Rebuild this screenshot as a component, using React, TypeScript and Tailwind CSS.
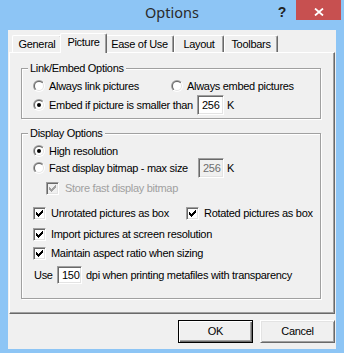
import React from "react";

function Radio({ checked }: { checked?: boolean }) {
  return (
    <svg width="12" height="12" viewBox="0 0 12 12" className="shrink-0">
      <defs>
        <linearGradient id="rOuter" x1="0" y1="0" x2="1" y2="1">
          <stop offset="0.5" stopColor="#a0a0a0" />
          <stop offset="0.5" stopColor="#ffffff" />
        </linearGradient>
        <linearGradient id="rInner" x1="0" y1="0" x2="1" y2="1">
          <stop offset="0.5" stopColor="#696969" />
          <stop offset="0.5" stopColor="#e3e3e3" />
        </linearGradient>
      </defs>
      <circle cx="6" cy="6" r="6" fill="url(#rOuter)" />
      <circle cx="6" cy="6" r="5" fill="url(#rInner)" />
      <circle cx="6" cy="6" r="4" fill="#ffffff" />
      {checked && <circle cx="6" cy="6" r="2" fill="#000000" />}
    </svg>
  );
}

function CheckBox({ disabled }: { disabled?: boolean }) {
  const tops = [2, 3, 4, 3, 2, 1, 0];
  return (
    <div
      className={`w-[13px] h-[13px] shrink-0 border border-t-[#a0a0a0] border-l-[#a0a0a0] border-r-white border-b-white shadow-[inset_1px_1px_0_#696969,inset_-1px_-1px_0_#e3e3e3] flex items-center justify-center ${
        disabled ? "bg-[#f0f0f0]" : "bg-white"
      }`}
    >
      <svg width="7" height="7" viewBox="0 0 7 7" shapeRendering="crispEdges">
        {tops.map((t, i) => (
          <rect key={i} x={i} y={t} width="1" height="3" fill={disabled ? "#a0a0a0" : "#000000"} />
        ))}
      </svg>
    </div>
  );
}

function Field({ children, disabled, size }: { children: React.ReactNode; disabled?: boolean; size: string }) {
  return (
    <div
      className={`${size} shrink-0 border border-t-[#a0a0a0] border-l-[#a0a0a0] border-r-white border-b-white shadow-[inset_1px_1px_0_#696969,inset_-1px_-1px_0_#e3e3e3] flex items-center pl-[4px] ${
        disabled ? "bg-[#f0f0f0] text-[#6d6d6d]" : "bg-white"
      }`}
    >
      {children}
    </div>
  );
}

function Tab({ children, w }: { children: React.ReactNode; w: string }) {
  return (
    <div
      className={`${w} h-[17px] shrink-0 border-t border-l border-r border-t-white border-l-white border-r-[#696969] shadow-[inset_-1px_0_0_#a0a0a0] rounded-tl-[2px] rounded-tr-[2px] flex items-center justify-center`}
    >
      {children}
    </div>
  );
}

export default function App() {
  return (
    <div className="w-[344px] h-[353px] bg-[#8dc5f5] flex flex-col overflow-hidden whitespace-nowrap font-['Liberation_Sans',Arial,sans-serif] text-black text-[11px] leading-[13px] tracking-[-0.3px]">
      {/* Title bar */}
      <div className="h-[30px] shrink-0 grid grid-cols-[1fr_auto_1fr]">
        <div />
        <div className="pt-[2px] font-['Noto_Sans',sans-serif] text-[14.5px] leading-[20px] tracking-normal text-[#2a2a2a]">
          Options
        </div>
        <div className="flex justify-end items-start">
          <div className="w-[16px] mr-[6px] pt-[2px] text-center text-[14px] leading-[20px] font-bold tracking-normal text-[#222]">?</div>
          <div className="w-[45px] h-[20px] mr-[3px] bg-[#c75050] flex justify-center pt-[8px]">
            <svg width="10" height="8" viewBox="0 0 10 8">
              <path d="M1 0.5 L9 7.5 M9 0.5 L1 7.5" stroke="#ffffff" strokeWidth="1.8" fill="none" />
            </svg>
          </div>
        </div>
      </div>

      {/* Client */}
      <div className="mx-[8px] h-[319px] shrink-0 bg-[#f0f0f0] flex flex-col">
        <div className="mx-[1px] flex flex-col">
          {/* Tab strip */}
          <div className="h-[22px] pt-[3px] pl-[3px] flex items-end">
            <Tab w="w-[50px]">General</Tab>
            <div className="relative z-10 -mx-[2px] w-[47px] h-[20px] -mb-[1px] shrink-0 bg-[#f0f0f0] border-t border-l border-r border-t-white border-l-white border-r-[#696969] shadow-[inset_-1px_0_0_#a0a0a0] rounded-tl-[2px] rounded-tr-[2px] flex items-center justify-center pb-[2px]">
              Picture
            </div>
            <Tab w="w-[69px]">Ease of Use</Tab>
            <Tab w="w-[50px]">Layout</Tab>
            <Tab w="w-[54px]">Toolbars</Tab>
          </div>

          {/* Panel */}
          <div className="h-[262px] border border-t-white border-l-white border-r-[#696969] border-b-[#696969] shadow-[inset_-1px_-1px_0_#a0a0a0] pt-[15px] pl-[11px] flex flex-col">
            {/* Link/Embed group */}
            <div className="w-[300px] h-[51px] border border-[#a0a0a0] shadow-[1px_1px_0_#ffffff,inset_1px_1px_0_#ffffff] flex flex-col">
              <div className="-mt-[7px] ml-[6px] self-start px-[2px] bg-[#f0f0f0]">Link/Embed Options</div>
              <div className="mt-[4px] h-[14px] pl-[11px] flex items-center">
                <div className="w-[138px] shrink-0 flex items-center gap-[4px]">
                  <Radio />
                  <span>Always link pictures</span>
                </div>
                <div className="flex items-center gap-[4px]">
                  <Radio />
                  <span>Always embed pictures</span>
                </div>
              </div>
              <div className="mt-[2px] h-[20px] pl-[11px] flex items-center">
                <Radio checked />
                <div className="ml-[4px] w-[148px] shrink-0">Embed if picture is smaller than</div>
                <Field size="w-[27px] h-[20px]">256</Field>
                <span className="ml-[3px]">K</span>
              </div>
            </div>

            {/* Display group */}
            <div className="mt-[14px] w-[300px] h-[166px] border border-[#a0a0a0] shadow-[1px_1px_0_#ffffff,inset_1px_1px_0_#ffffff] flex flex-col">
              <div className="-mt-[7px] ml-[6px] self-start px-[2px] bg-[#f0f0f0]">Display Options</div>
              <div className="mt-[4px] h-[14px] pl-[11px] flex items-center gap-[4px]">
                <Radio checked />
                <span>High resolution</span>
              </div>
              <div className="h-[20px] pl-[11px] flex items-center">
                <Radio />
                <div className="ml-[4px] w-[149px] shrink-0">Fast display bitmap - max size</div>
                <Field size="w-[26px] h-[20px]" disabled>
                  256
                </Field>
                <span className="ml-[3px]">K</span>
              </div>
              <div className="mt-[3px] h-[14px] pl-[24px] flex items-center gap-[6px] text-[#a0a0a0]">
                <CheckBox disabled />
                <span>Store fast display bitmap</span>
              </div>
              <div className="mt-[11px] h-[14px] pl-[11px] flex items-center">
                <div className="w-[153px] shrink-0 flex items-center gap-[5px]">
                  <CheckBox />
                  <span>Unrotated pictures as box</span>
                </div>
                <div className="flex items-center gap-[5px]">
                  <CheckBox />
                  <span>Rotated pictures as box</span>
                </div>
              </div>
              <div className="mt-[7px] h-[14px] pl-[11px] flex items-center gap-[5px]">
                <CheckBox />
                <span>Import pictures at screen resolution</span>
              </div>
              <div className="mt-[5px] h-[14px] pl-[11px] flex items-center gap-[5px]">
                <CheckBox />
                <span>Maintain aspect ratio when sizing</span>
              </div>
              <div className="mt-[6px] h-[18px] pl-[12px] flex items-center">
                <div className="w-[23px] shrink-0">Use</div>
                <Field size="w-[25px] h-[18px]">150</Field>
                <span className="ml-[4px]">dpi when printing metafiles with transparency</span>
              </div>
            </div>
          </div>
        </div>

        {/* Buttons */}
        <div className="mt-[6px] mr-[1px] flex justify-end gap-[7px]">
          <div className="w-[75px] h-[23px] border border-black shadow-[inset_1px_1px_0_#ffffff,inset_-1px_-1px_0_#696969,inset_-2px_-2px_0_#a0a0a0] flex items-center justify-center">
            OK
          </div>
          <div className="w-[75px] h-[23px] border border-t-white border-l-white border-r-[#696969] border-b-[#696969] shadow-[inset_1px_1px_0_#e3e3e3,inset_-1px_-1px_0_#a0a0a0] flex items-center justify-center">
            Cancel
          </div>
        </div>
      </div>
    </div>
  );
}
